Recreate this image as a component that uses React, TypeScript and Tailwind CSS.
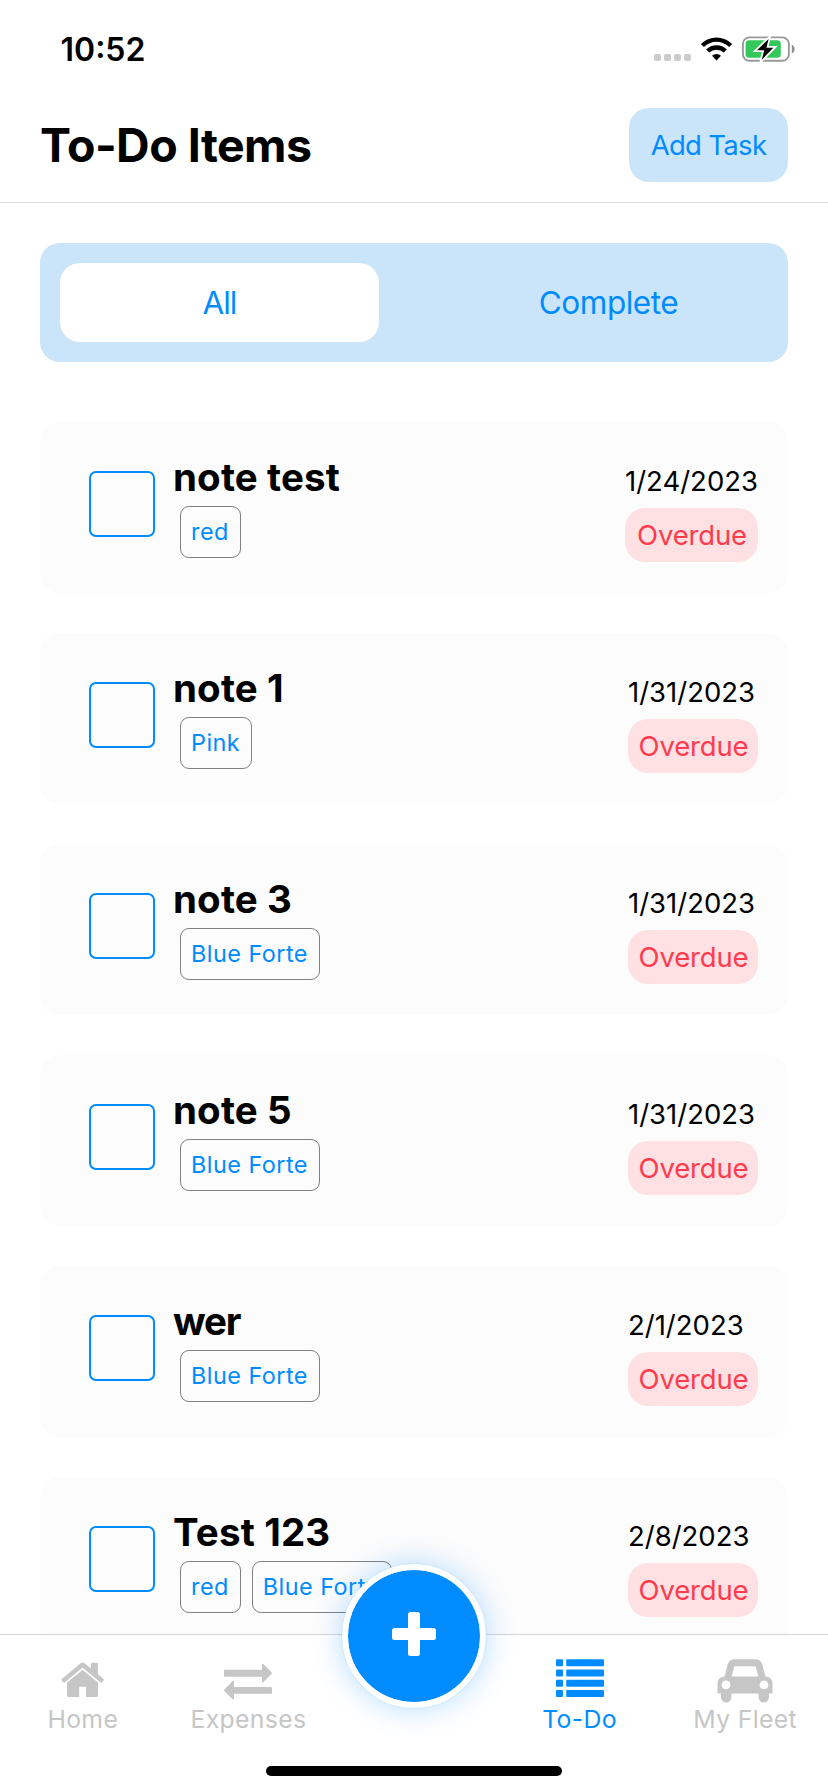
import type { ReactNode } from "react";

type Task = { title: string; tags: string[]; date: string; tight?: boolean };

const tasks: Task[] = [
  { title: "note test", tags: ["red"], date: "1/24/2023" },
  { title: "note 1", tags: ["Pink"], date: "1/31/2023" },
  { title: "note 3", tags: ["Blue Forte"], date: "1/31/2023" },
  { title: "note 5", tags: ["Blue Forte"], date: "1/31/2023" },
  { title: "wer", tags: ["Blue Forte"], date: "2/1/2023", tight: true },
  { title: "Test 123", tags: ["red", "Blue Forte"], date: "2/8/2023" },
];

function WifiIcon() {
  return (
    <svg className="ml-[9px] h-[24px] w-[33px]" viewBox="0 0 33 24">
      <path d="M0.8 6.9A22.4 22.4 0 0 1 32.2 6.9L29.1 10A18 18 0 0 0 3.9 10Z" />
      <path d="M6.1 12.4A14.8 14.8 0 0 1 26.9 12.4L23.7 15.6A10.3 10.3 0 0 0 9.3 15.6Z" />
      <path d="M12 18.7A6.6 6.6 0 0 1 21 18.7L16.5 23.6Z" />
    </svg>
  );
}

function BatteryIcon() {
  return (
    <svg className="ml-[8px] h-[28px] w-[54px]" viewBox="0 0 54 28">
      <rect x="1.9" y="2.4" width="46" height="23.4" rx="6.5" fill="none" stroke="#999" strokeWidth="1.9" />
      <path d="M50.8 9.8c1.8.6 2.8 2.3 2.8 4.3s-1 3.7-2.8 4.3z" fill="#8f8f8f" />
      <rect x="4.6" y="5.2" width="35.2" height="17.6" rx="3.6" fill="#34c759" />
      <path d="M27.6 4L16 15.2H23.2L20.8 24.8L32.4 12.8H25.4Z" stroke="#fff" strokeWidth="3.6" />
      <path d="M27.6 4L16 15.2H23.2L20.8 24.8L32.4 12.8H25.4Z" />
    </svg>
  );
}

function HomeIcon() {
  return (
    <svg className="h-[44px] w-[44px]" viewBox="0 0 44 44" fill="currentColor">
      <path d="M21.6 10.9L37 23.6V36.5a1.5 1.5 0 0 1-1.5 1.5H25V27.7H18.2V38H7.5A1.5 1.5 0 0 1 6 36.5V23.6Z" />
      <path d="M19.3 4.4a3.6 3.6 0 0 1 4.6 0L30 9.5V5a1.2 1.2 0 0 1 1.2-1.2h4.5A1.2 1.2 0 0 1 36.9 5v10.3l5.6 4.7a1 1 0 0 1 .1 1.4l-1.6 1.9a1 1 0 0 1-1.4.1L21.6 8.5L3.7 23.4a1 1 0 0 1-1.4-.1L.7 21.4a1 1 0 0 1 .1-1.4Z" />
    </svg>
  );
}

function ExchangeIcon() {
  return (
    <svg className="h-[44px] w-[48px]" viewBox="0 0 48 44" fill="currentColor">
      <path d="M.8 10.7H38V5.6a.8.8 0 0 1 1.4-.6l8.3 8.5a1 1 0 0 1 0 1.3L39.4 23.2a.8.8 0 0 1-1.4-.6V17.700H.8a.8.8 0 0 1-.8-.8V11.5a.8.8 0 0 1 .8-.8Z" />
      <path d="M47.2 27.9H10V22.700a.8.8 0 0 0-1.4-.6L.3 30.6a1 1 0 0 0 0 1.3L8.6 40.3a.8.8 0 0 0 1.4-.6V34.700H47.2a.8.8 0 0 0 .8-.8V28.700a.8.8 0 0 0-.8-.8Z" />
    </svg>
  );
}

function ListIcon() {
  return (
    <svg className="h-[44px] w-[48px]" viewBox="0 0 48 44" fill="currentColor">
      {[0.3, 10.5, 20.8, 31].map((y) => (
        <g key={y}>
          <rect x="0" y={y} width="7" height="7" rx="1" />
          <rect x="10.2" y={y} width="37.8" height="7" rx="1" />
        </g>
      ))}
    </svg>
  );
}

function CarIcon() {
  return (
    <svg className="h-[44px] w-[56px]" viewBox="0 0 56 44" fill="currentColor">
      <path
        fillRule="evenodd"
        d="M17.5 0.2H38.5C42 .2 44.5 2.4 45.4 5.6L48.4 17.6C52.8 17.6 55.5 20.5 55.5 24.8V33.7a.8.8 0 0 1-.8.8H52V38.2a5.2 5.2 0 0 1-10.4 0V34.5H14.4V38.2a5.2 5.2 0 0 1-10.4 0V34.5H1.3a.8.8 0 0 1-.8-.8V24.8C.5 20.5 3.2 17.6 7.6 17.6L10.6 5.6C11.5 2.4 14 .2 17.5.2ZM18 7.2a.9.9 0 0 0-.9.7L14.6 17.6H41.4L38.9 7.9a.9.9 0 0 0-.9-.7ZM9 21.5a4.4 4.4 0 1 0 0 8.8a4.4 4.4 0 1 0 0-8.8ZM47 21.5a4.4 4.4 0 1 0 0 8.8a4.4 4.4 0 1 0 0-8.8Z"
      />
    </svg>
  );
}

function NavItem({ label, active, children }: { label: string; active?: boolean; children: ReactNode }) {
  return (
    <button className={`flex flex-col items-center pt-[24px] ${active ? "text-[#008cff]" : "text-[#c6c6c6]"}`}>
      {children}
      <span className="mt-px text-[24.8px] leading-[30px] tracking-[0.32px] whitespace-nowrap">{label}</span>
    </button>
  );
}

function TaskCard({ task }: { task: Task }) {
  return (
    <li className="flex h-[171px] shrink-0 rounded-[20px] bg-[#fcfcfc] pr-[30px] pl-[49px]">
      <button aria-label="Complete task" className="mt-[49px] h-[66px] w-[66px] shrink-0 rounded-[7px] border-2 border-[#008cff]" />
      <div className="ml-[18px] flex-1 pt-[35px]">
        <h2 className={`text-[38.5px] leading-[40px] font-bold ${task.tight ? "tracking-[-1.2px]" : "tracking-[0.15px]"}`}>{task.title}</h2>
        <div className="mt-[9px] ml-[7px] flex gap-[11px]">
          {task.tags.map((tag) => (
            <span
              key={tag}
              className="flex h-[52px] items-center rounded-[9px] border border-[#808080] pr-[11px] pl-[10px] text-[23.4px] tracking-[0.48px] text-[#008cff]"
            >
              {tag}
            </span>
          ))}
        </div>
      </div>
      <div className="flex flex-col pt-[41px]">
        <time className="text-[27.5px] leading-[36px]">{task.date}</time>
        <span className="mt-[9px] flex h-[54px] min-w-[130px] items-center justify-center rounded-[20px] bg-[#ffe1e3] pl-px text-[27.5px] leading-[34px] tracking-[-0.16px] text-[#ff3b4e]">
          Overdue
        </span>
      </div>
    </li>
  );
}

export default function App() {
  return (
    <div className="relative flex h-[1792px] w-[828px] flex-col overflow-hidden bg-white font-[Inter,sans-serif] text-black">
      <div className="flex h-[88px] shrink-0 items-start justify-between pr-[33px] pl-[60.5px]">
        <span className="mt-[30px] text-[32px] leading-[40px] font-semibold">10:52</span>
        <div className="mt-[35px] flex items-center">
          <div className="mt-[17px] flex gap-[3px]">
            <i className="h-[7px] w-[7px] rounded-[2px] bg-[#ccc]" />
            <i className="h-[7px] w-[7px] rounded-[2px] bg-[#ccc]" />
            <i className="h-[7px] w-[7px] rounded-[2px] bg-[#ccc]" />
            <i className="h-[7px] w-[7px] rounded-[2px] bg-[#ccc]" />
          </div>
          <WifiIcon />
          <BatteryIcon />
        </div>
      </div>

      <header className="flex h-[115px] shrink-0 items-center justify-between border-b border-[#dedede] px-[40px]">
        <h1 className="text-[46.5px] leading-none font-bold tracking-[-0.52px]">To-Do Items</h1>
        <button className="h-[74px] w-[159px] rounded-[20px] bg-[#cae4fa] text-[27.5px] leading-[34px] tracking-[-0.7px] text-[#008cff]">
          Add Task
        </button>
      </header>

      <div className="mx-[40px] mt-[40px] grid h-[119px] shrink-0 grid-cols-2 gap-[70px] rounded-[20px] bg-[#cae4fa] p-[20px] text-[31.5px] text-[#008cff]">
        <button className="rounded-[20px] bg-white tracking-[-1px]">All</button>
        <button className="tracking-[-0.47px]">Complete</button>
      </div>

      <ul className="mx-[40px] mt-[60px] flex min-h-0 flex-1 flex-col gap-[40px] overflow-hidden">
        {tasks.map((task) => (
          <TaskCard key={task.title} task={task} />
        ))}
      </ul>

      <nav className="grid h-[158px] shrink-0 grid-cols-5 border-t border-[#d5d5d5] bg-white">
        <NavItem label="Home">
          <HomeIcon />
        </NavItem>
        <NavItem label="Expenses">
          <ExchangeIcon />
        </NavItem>
        <span />
        <NavItem label="To-Do" active>
          <ListIcon />
        </NavItem>
        <NavItem label="My Fleet">
          <CarIcon />
        </NavItem>
      </nav>

      <button
        aria-label="Add"
        className="absolute top-[1564px] left-[342px] flex h-[144px] w-[144px] justify-center rounded-full border-[6px] border-white bg-[#008cff] bg-clip-padding pt-[42px] shadow-[0_0_1px_rgba(0,140,255,0.5),0_0_30px_rgba(0,140,255,0.3)]"
      >
        <svg className="h-[44px] w-[44px]" viewBox="0 0 44 44" fill="#fff">
          <rect x="16" y="0" width="12" height="44" rx="2.5" />
          <rect x="0" y="16" width="44" height="12" rx="2.5" />
        </svg>
      </button>
      <div className="absolute top-[1766px] left-[266px] h-[10px] w-[296px] rounded-full bg-black" />
    </div>
  );
}
